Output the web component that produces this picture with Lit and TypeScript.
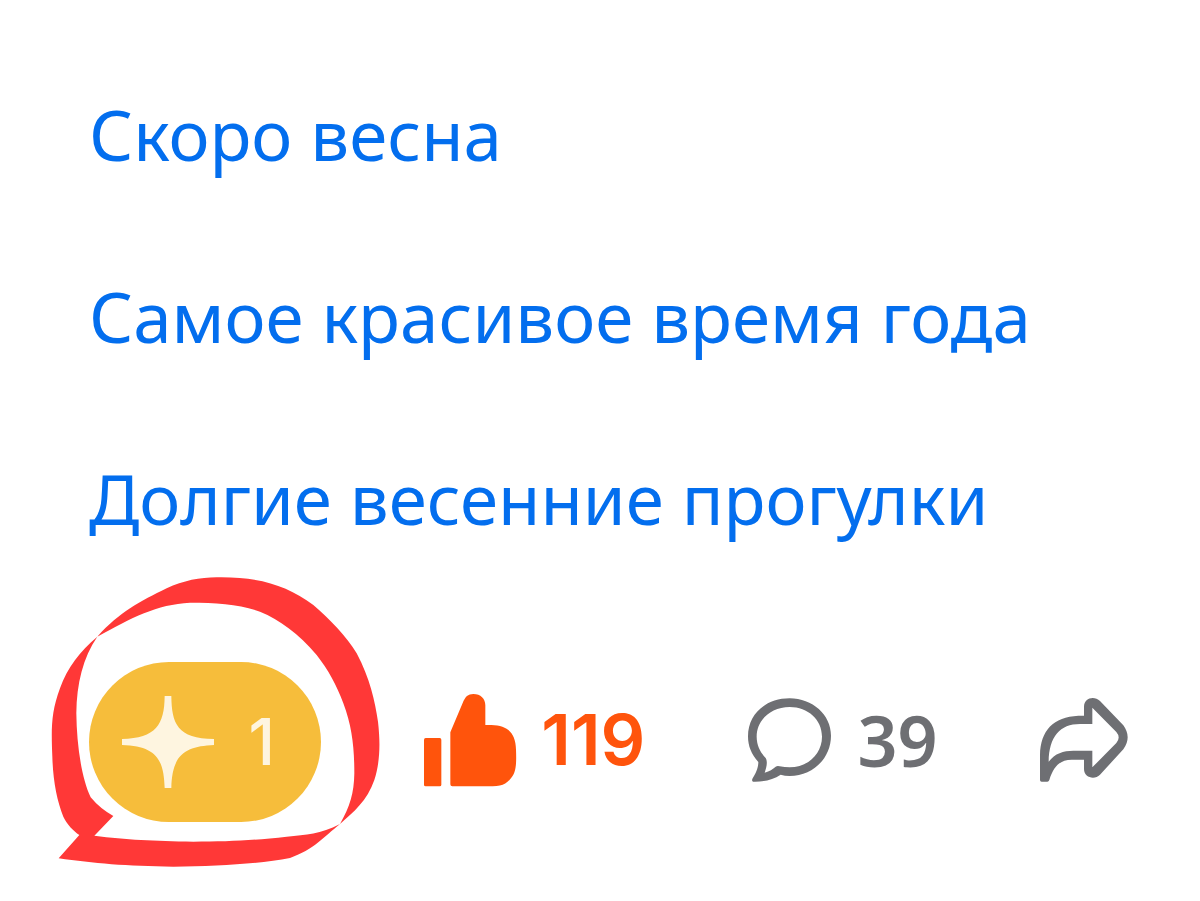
import { LitElement, html, css } from "lit";
import { customElement } from "lit/decorators.js";

@customElement("app-root")
export class AppRoot extends LitElement {
  static styles = css`
    :host {
      display: block;
      min-height: 100vh;
      background: #fff;
      font-family: "Noto Sans", "Open Sans", sans-serif;
    }
    .page {
      padding: 88px 72px 40px 89px;
    }
    .topics {
      display: flex;
      flex-direction: column;
      gap: 90px;
      margin: 0;
      padding: 0;
      list-style: none;
    }
    .topic {
      display: block;
      color: #036eee;
      font-size: 69px;
      line-height: 92px;
      text-decoration: none;
      white-space: nowrap;
    }
    .actions {
      display: flex;
      align-items: center;
      justify-content: space-between;
      margin-top: 118px;
    }
    button {
      display: flex;
      align-items: center;
      margin: 0;
      padding: 0;
      border: 0;
      background: none;
      font-family: inherit;
      font-size: 70px;
      font-weight: 600;
      line-height: 92px;
      color: #6e6f73;
      cursor: pointer;
    }
    svg {
      display: block;
      flex: none;
    }
    .boost-wrap {
      position: relative;
    }
    .boost {
      width: 232px;
      height: 160px;
      padding: 0 46px 0 32px;
      justify-content: space-between;
      border-radius: 80px;
      background: #f6bd3b;
      color: #fef5e0;
      font-family: "Inter", sans-serif;
      font-size: 64px;
      font-weight: 500;
    }
    .mark {
      position: absolute;
      left: -49px;
      top: -92px;
      pointer-events: none;
    }
    .like,
    .comment {
      gap: 24px;
      padding-bottom: 4px;
    }
    .like {
      color: #ff540c;
      font-family: "Inter", sans-serif;
    }
    .comment {
      gap: 26px;
    }
  `;

  render() {
    return html`
      <main class="page">
        <ul class="topics">
          <li><a class="topic" href="#">Скоро весна</a></li>
          <li><a class="topic" href="#">Самое красивое время года</a></li>
          <li><a class="topic" href="#">Долгие весенние прогулки</a></li>
        </ul>
        <div class="actions">
          <div class="boost-wrap">
            <button class="boost">
              <svg width="94" height="94" viewBox="0 0 282 282" fill="currentColor" aria-hidden="true">
                <path d="M131 3H151C152 86 169 131 279 132V150C196 154 153 175 151 279H131C128 190 105 154 3 150V132C105 129 130 90 131 3Z" />
              </svg>
              <span>1</span>
            </button>
            <svg class="mark" width="350" height="310" viewBox="0 0 1050 930" fill="#ff3837" aria-hidden="true">
              <path d="M172 200C240 125 300 94 380 55C430 32 480 22 530 22C660 20 740 46 820 105C870 148 920 200 950 250C990 325 1005 395 1014 455C1022 525 1019 580 1003 630C982 692 940 727 900 762C930 710 942 670 943 610C943 530 936 470 910 400C890 345 865 300 830 255C775 190 720 150 660 125C600 103 530 98 450 98C350 103 275 143 172 200Z" />
              <path d="M172 200C120 244 82 292 60 355C32 430 34 480 37 560C39 630 50 690 70 740C82 765 100 782 118 795L56 865C160 880 260 889 400 890C530 889 660 882 750 864C822 838 850 802 900 762C840 793 800 794 740 800C640 811 560 815 460 815C340 813 260 809 163 797L220 738Q180 716 152 682C123 620 110 520 109 430C110 340 129 263 172 200Z" />
            </svg>
          </div>
          <button class="like">
            <svg width="94" height="94" viewBox="0 0 282 282" fill="currentColor" aria-hidden="true">
              <rect x="3" y="135" width="52" height="145" rx="5" />
              <path d="M82 118L119 30C127 11 135 3 151 3C173 3 187 17 187 37V96H205C256 97 278 122 279 170C281 222 278 242 260 260C243 279 225 280 180 280H88Q82 280 82 274Z" />
            </svg>
            <span>119</span>
          </button>
          <button class="comment">
            <svg width="84" height="94" viewBox="0 0 252 282" fill="currentColor" fill-rule="evenodd" aria-hidden="true">
              <path d="M15 266Q10 263 14 256C27 235 31 220 31 207C10 183 0 160 0 130C0 62 55 16 125 16C193 16 249 65 249 128C249 195 195 249 125 249Q110 249 98 245C75 260 50 267 15 266ZM50 239C65 235 74 228 83 221Q88 218 95 220C105 222 115 223 125 223C180 223 222 182 222 131C222 80 180 42 125 42C70 42 26 80 26 131C26 160 40 181 53 195C60 206 55 225 50 239Z" />
            </svg>
            <span>39</span>
          </button>
          <button class="share" aria-label="Поделиться">
            <svg width="88" height="94" viewBox="0 0 264 282" fill="currentColor" fill-rule="evenodd" aria-hidden="true">
              <path d="M5 260Q0 260 0 255V180C2 105 40 66 115 62H132V36C132 8 163 2 180 18L250 91Q276 127 250 163L180 239C163 257 132 247 132 222V194H95C60 194 40 215 28 255Q26 260 22 260ZM157 38V87H120C60 87 27 125 26 200C45 175 70 167 100 167H157V217L229 144Q243 127 229 111Z" />
            </svg>
          </button>
        </div>
      </main>
    `;
  }
}
